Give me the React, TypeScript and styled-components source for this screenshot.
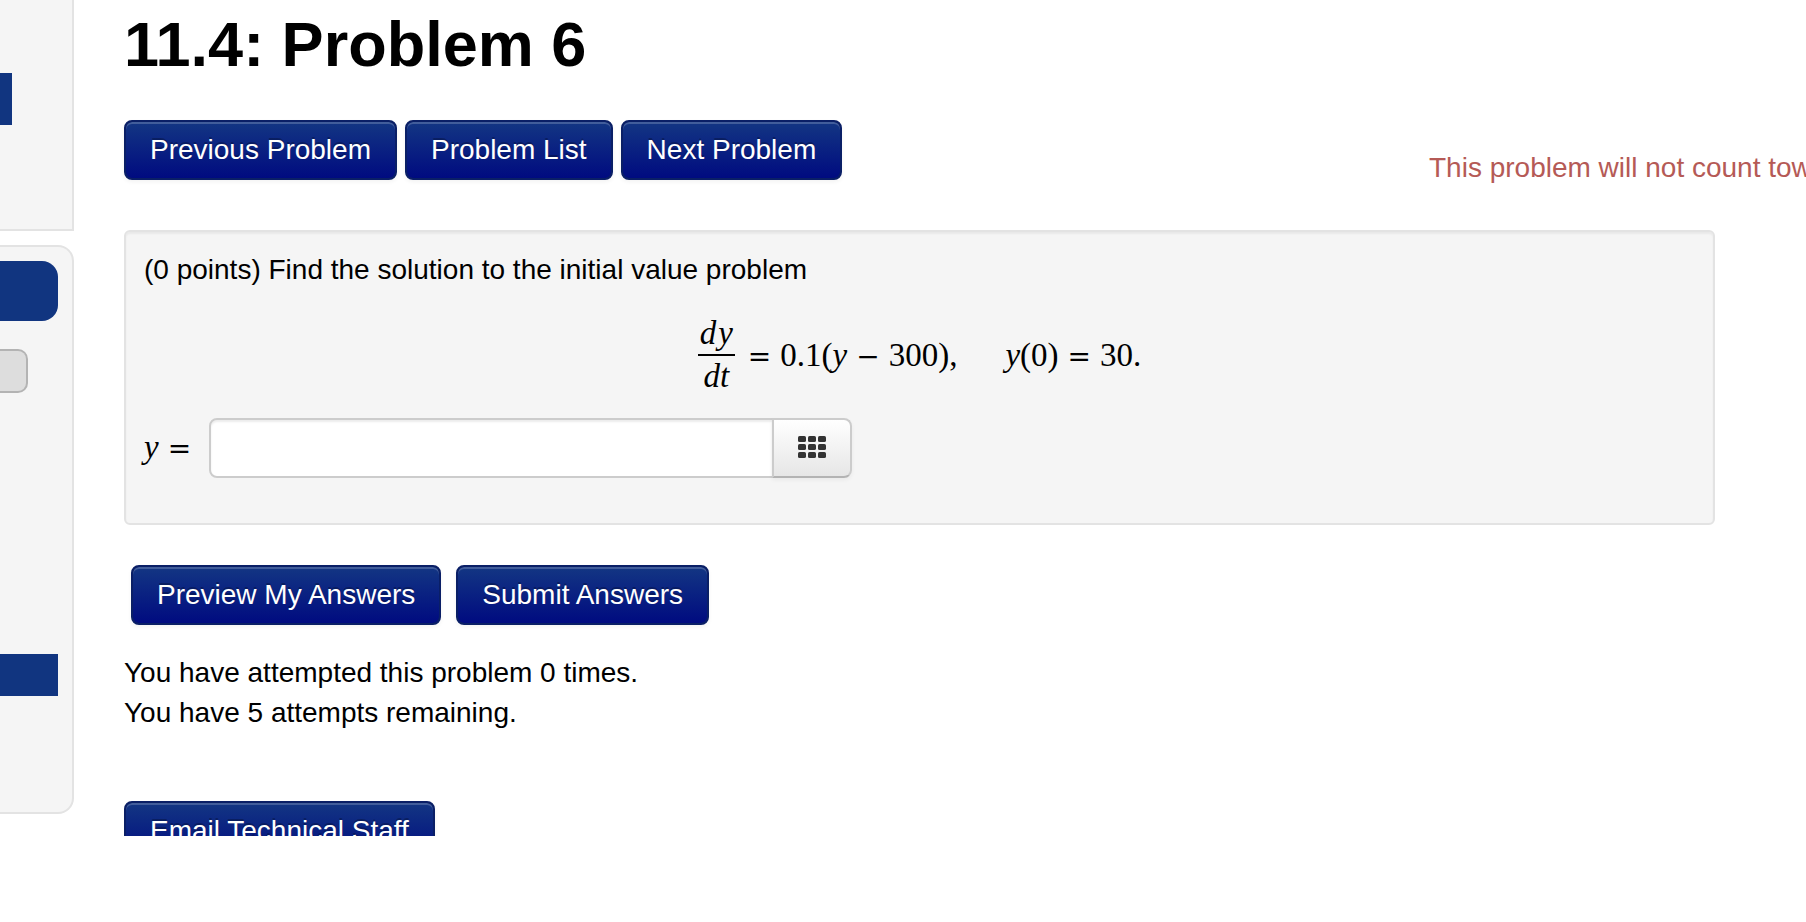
import React from "react";
import styled, { createGlobalStyle } from "styled-components";

const GlobalStyle = createGlobalStyle`
  *, *::before, *::after { box-sizing: border-box; }
  body {
    margin: 0;
    background: #fff;
    color: #000;
    font: 28px/40px "Liberation Sans", Arial, sans-serif;
  }
`;

const Page = styled.div`
  display: flex;
  align-items: flex-start;
  overflow: hidden;
`;

const Sidebar = styled.aside`
  flex: 0 0 74px;
  display: flex;
  flex-direction: column;
  gap: 14px;
`;

const SidePanel = styled.div<{ $rounded?: boolean }>`
  display: flex;
  flex-direction: column;
  background: #f5f5f5;
  border: solid #e3e3e3;
  border-width: ${(p) => (p.$rounded ? "2px 2px 2px 0" : "0 2px 2px 0")};
  border-radius: ${(p) => (p.$rounded ? "0 16px 16px 0" : "0")};
  padding: ${(p) => (p.$rounded ? "14px 14px 116px 0" : "73px 0 104px")};
`;

const SideBlock = styled.div<{ $height: number; $width?: number; $radius?: number }>`
  height: ${(p) => p.$height}px;
  width: ${(p) => (p.$width ? `${p.$width}px` : "100%")};
  border-radius: 0 ${(p) => p.$radius ?? 0}px ${(p) => p.$radius ?? 0}px 0;
  background: #113580;
`;

const SideButton = styled.button`
  width: 28px;
  height: 44px;
  margin: 28px 0 261px;
  padding: 0;
  border: 2px solid #b3b3b3;
  border-left: 0;
  border-radius: 0 10px 10px 0;
  background: #ddd;
`;

const Main = styled.main`
  flex: 1;
  min-width: 0;
  padding: 4px 91px 0 50px;
`;

const Title = styled.h1`
  margin: 0;
  font-size: 63px;
  line-height: 80px;
  font-weight: bold;
`;

const NavRow = styled.div`
  display: flex;
  justify-content: space-between;
  margin-top: 36px;
`;

const ButtonGroup = styled.div<{ $gap: number }>`
  display: flex;
  gap: ${(p) => p.$gap}px;
`;

const Button = styled.button`
  height: 60px;
  padding: 0 24px;
  border: 2px solid #0a1f66;
  border-radius: 8px;
  background: linear-gradient(#133683, #000b80) padding-box, #0a1f66;
  box-shadow: inset 0 2px 0 rgba(255, 255, 255, 0.2), 0 2px 4px rgba(0, 0, 0, 0.05);
  color: #fff;
  font: inherit;
  text-shadow: 0 -2px 0 rgba(0, 0, 0, 0.25);
  white-space: nowrap;
`;

const Notice = styled.p`
  width: 286px;
  margin: 28px 0 0;
  color: #b55a56;
  white-space: nowrap;
`;

const Well = styled.section`
  margin-top: 42px;
  padding: 18px 18px 45px;
  border: 2px solid #e3e3e3;
  border-radius: 6px;
  background: #f5f5f5;
  box-shadow: inset 0 2px 2px rgba(0, 0, 0, 0.05);
`;

const Text = styled.p`
  margin: 0;
`;

const MathText = styled.span`
  font-family: "Liberation Serif", "Times New Roman", serif;
  font-size: 33px;
  line-height: 40px;
  white-space: nowrap;
`;

const Equation = styled(MathText)`
  display: flex;
  justify-content: center;
  align-items: center;
  margin-top: 23px;
`;

const Operator = styled.span`
  margin: 0 9px;
  font-family: "DejaVu Serif", serif;
  font-size: 28px;
  line-height: 1px;
`;

const Fraction = styled.span`
  display: flex;
  flex-direction: column;
  align-items: center;
  margin-right: 4px;
`;

const Numerator = styled.i`
  display: flex;
  gap: 2px;
  padding: 0 2px 1px;
  border-bottom: 2px solid #000;
`;

const Condition = styled.span`
  margin-left: 48px;
`;

const AnswerRow = styled.div`
  display: flex;
  align-items: center;
  margin-top: 22px;
`;

const AnswerLabel = styled.label`
  flex: 0 0 65px;
`;

const AnswerInput = styled.input`
  width: 565px;
  height: 60px;
  padding: 8px 12px;
  border: 2px solid #ccc;
  border-radius: 8px 0 0 8px;
  background: #fff;
  box-shadow: inset 0 2px 2px rgba(0, 0, 0, 0.075);
  font: inherit;
`;

const KeypadButton = styled.button`
  display: flex;
  align-items: center;
  justify-content: center;
  width: 80px;
  height: 60px;
  margin-left: -2px;
  padding: 0 0 2px;
  border: 2px solid #ccc;
  border-bottom-color: #b3b3b3;
  border-radius: 0 8px 8px 0;
  background: linear-gradient(#fff, #e6e6e6);
  box-shadow: 0 2px 4px rgba(0, 0, 0, 0.05);
`;

const SubmitRow = styled.div`
  margin: 40px 0 28px;
  padding-left: 7px;
`;

const Footer = styled.footer`
  height: 35px;
  margin-top: 68px;
  overflow: hidden;
`;

const KeypadIcon = () => (
  <svg width="28" height="22" viewBox="0 0 28 22" fill="#333" aria-hidden="true">
    {[0, 8, 16].map((y) =>
      [0, 10, 20].map((x) => <rect key={`${x}-${y}`} x={x} y={y} width="8" height="6" rx="1.6" />)
    )}
  </svg>
);

export default function App() {
  return (
    <>
      <GlobalStyle />
      <Page>
        <Sidebar>
          <SidePanel>
            <SideBlock $height={52} $width={12} />
          </SidePanel>
          <SidePanel $rounded>
            <SideBlock $height={60} $radius={16} />
            <SideButton type="button" aria-label="Options" />
            <SideBlock $height={42} />
          </SidePanel>
        </Sidebar>
        <Main>
          <Title>11.4: Problem 6</Title>
          <NavRow>
            <ButtonGroup $gap={8}>
              <Button type="button">Previous Problem</Button>
              <Button type="button">Problem List</Button>
              <Button type="button">Next Problem</Button>
            </ButtonGroup>
            <Notice>This problem will not count towards your grade.</Notice>
          </NavRow>
          <Well>
            <Text>(0 points) Find the solution to the initial value problem</Text>
            <Equation>
              <Fraction>
                <Numerator>
                  <span>d</span>
                  <span>y</span>
                </Numerator>
                <i>dt</i>
              </Fraction>
              <span>
                <Operator>=</Operator>0.1(<i>y</i>
                <Operator>−</Operator>300),
              </span>
              <Condition>
                <i>y</i>(0)<Operator>=</Operator>30.
              </Condition>
            </Equation>
            <AnswerRow>
              <AnswerLabel htmlFor="answer">
                <MathText>
                  <i>y</i>
                  <Operator>=</Operator>
                </MathText>
              </AnswerLabel>
              <AnswerInput id="answer" type="text" />
              <KeypadButton type="button" aria-label="Equation editor">
                <KeypadIcon />
              </KeypadButton>
            </AnswerRow>
          </Well>
          <SubmitRow>
            <ButtonGroup $gap={15}>
              <Button type="button">Preview My Answers</Button>
              <Button type="button">Submit Answers</Button>
            </ButtonGroup>
          </SubmitRow>
          <Text>You have attempted this problem 0 times.</Text>
          <Text>You have 5 attempts remaining.</Text>
          <Footer>
            <Button type="button">Email Technical Staff</Button>
          </Footer>
        </Main>
      </Page>
    </>
  );
}
